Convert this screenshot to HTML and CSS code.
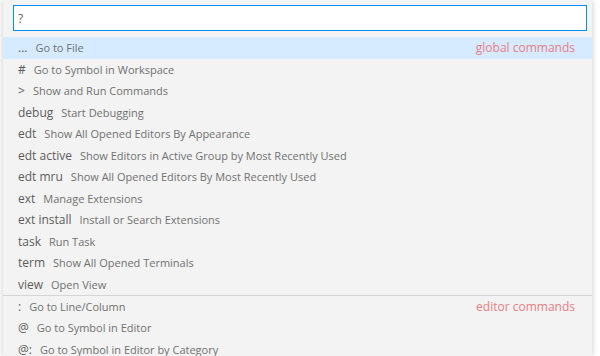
FILE: index.html
```html
<!DOCTYPE html>
<html lang="en">
<head>
    <meta charset="UTF-8">
    <title>Quick Open Help</title>
    <link rel="stylesheet" href="styles.css">
</head>
<body>
    <div class="quick-pick">
        <div class="input-wrap">
            <input type="text" class="quick-input" value="?">
        </div>

        <ul class="pick-list">
            <li class="pick-row focused">
                <span class="prefix">...</span>
                <span class="label">Go to File</span>
                <span class="group">global commands</span>
            </li>
            <li class="pick-row"><span class="prefix">#</span><span class="label">Go to Symbol in Workspace</span></li>
            <li class="pick-row"><span class="prefix">&gt;</span><span class="label">Show and Run Commands</span></li>
            <li class="pick-row"><span class="prefix">debug</span><span class="label">Start Debugging</span></li>
            <li class="pick-row"><span class="prefix">edt</span><span class="label">Show All Opened Editors By Appearance</span></li>
            <li class="pick-row"><span class="prefix">edt active</span><span class="label">Show Editors in Active Group by Most Recently Used</span></li>
            <li class="pick-row"><span class="prefix">edt mru</span><span class="label">Show All Opened Editors By Most Recently Used</span></li>
            <li class="pick-row"><span class="prefix">ext</span><span class="label">Manage Extensions</span></li>
            <li class="pick-row"><span class="prefix">ext install</span><span class="label">Install or Search Extensions</span></li>
            <li class="pick-row"><span class="prefix">task</span><span class="label">Run Task</span></li>
            <li class="pick-row"><span class="prefix">term</span><span class="label">Show All Opened Terminals</span></li>
            <li class="pick-row"><span class="prefix">view</span><span class="label">Open View</span></li>
            <li class="pick-row separated">
                <span class="prefix">:</span>
                <span class="label">Go to Line/Column</span>
                <span class="group">editor commands</span>
            </li>
            <li class="pick-row"><span class="prefix">@</span><span class="label">Go to Symbol in Editor</span></li>
            <li class="pick-row"><span class="prefix">@:</span><span class="label">Go to Symbol in Editor by Category</span></li>
        </ul>
    </div>
</body>
</html>
```

FILE: styles.css
```css
html, body {
    margin: 0;
    height: 100%;
    overflow: hidden;
}

body {
    background-color: #ffffff;
    font-family: 'Open Sans', 'Noto Sans', sans-serif;
    color: #616161;
}

.quick-pick {
    width: 589px;
    height: 100%;
    margin-left: 3px;
    background-color: #f3f3f3;
    box-shadow: 0 0 6px rgba(0, 0, 0, 0.22);
    padding-top: 5px;
    box-sizing: border-box;
}

.input-wrap {
    padding: 0 5px 0 10px;
}

.quick-input {
    display: block;
    width: 100%;
    height: 26px;
    box-sizing: border-box;
    border: 1px solid #0090f1;
    background-color: white;
    padding: 0 4px;
    font-family: inherit;
    font-size: 12px;
    color: #616161;
    outline: none;
}

.pick-list {
    list-style: none;
    margin: 6px 0 0;
    padding: 0;
}

.pick-row {
    display: flex;
    align-items: center;
    height: 21.5px;
    padding: 0 17px 0 15px;
    white-space: nowrap;
}

.pick-row.focused {
    background-color: #d6ebff;
}

.pick-row.separated {
    border-top: 1px solid #d5d5d5;
    height: 21px;
}

.prefix {
    font-size: 12px;
    color: #5c5c5c;
    margin-right: 8px;
}

.label {
    font-size: 11px;
    color: #717171;
}

.group {
    margin-left: auto;
    font-size: 12px;
    color: #ea7d84;
}
```
